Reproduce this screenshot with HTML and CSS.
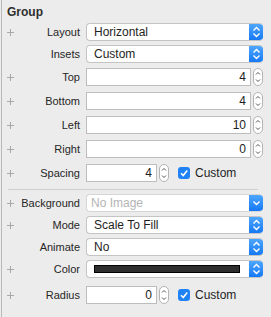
FILE: index.html
```html
<!DOCTYPE html>
<html>
<head>
    <title>Group Inspector</title>
    <link rel="stylesheet" href="styles.css">
</head>
<body>
    <div class="panel">
        <div class="title">Group</div>

        <div class="row pop-row">
            <span class="plus"><svg width="7" height="7"><path d="M3.5 0V7M0 3.5H7" stroke="#a8a8a8" stroke-width="1"/></svg></span>
            <label>Layout</label>
            <div class="popup"><span class="value">Horizontal</span><span class="arrows"><svg width="13" height="18"><path d="M3.5 7.5L6.5 4.5L9.5 7.5M3.5 10.5L6.5 13.5L9.5 10.5" fill="none" stroke="#fff" stroke-width="1.4"/></svg></span></div>
        </div>

        <div class="row pop-row">
            <span class="plus"></span>
            <label>Insets</label>
            <div class="popup"><span class="value">Custom</span><span class="arrows"><svg width="13" height="18"><path d="M3.5 7.5L6.5 4.5L9.5 7.5M3.5 10.5L6.5 13.5L9.5 10.5" fill="none" stroke="#fff" stroke-width="1.4"/></svg></span></div>
        </div>

        <div class="row field-row">
            <span class="plus"><svg width="7" height="7"><path d="M3.5 0V7M0 3.5H7" stroke="#a8a8a8" stroke-width="1"/></svg></span>
            <label>Top</label>
            <div class="field">4</div>
            <span class="stepper"><svg width="10" height="18"><path d="M3 6.5L5 4.5L7 6.5M3 11.5L5 13.5L7 11.5" fill="none" stroke="#555" stroke-width="1"/></svg></span>
        </div>

        <div class="row field-row">
            <span class="plus"><svg width="7" height="7"><path d="M3.5 0V7M0 3.5H7" stroke="#a8a8a8" stroke-width="1"/></svg></span>
            <label>Bottom</label>
            <div class="field">4</div>
            <span class="stepper"><svg width="10" height="18"><path d="M3 6.5L5 4.5L7 6.5M3 11.5L5 13.5L7 11.5" fill="none" stroke="#555" stroke-width="1"/></svg></span>
        </div>

        <div class="row field-row">
            <span class="plus"><svg width="7" height="7"><path d="M3.5 0V7M0 3.5H7" stroke="#a8a8a8" stroke-width="1"/></svg></span>
            <label>Left</label>
            <div class="field">10</div>
            <span class="stepper"><svg width="10" height="18"><path d="M3 6.5L5 4.5L7 6.5M3 11.5L5 13.5L7 11.5" fill="none" stroke="#555" stroke-width="1"/></svg></span>
        </div>

        <div class="row field-row">
            <span class="plus"><svg width="7" height="7"><path d="M3.5 0V7M0 3.5H7" stroke="#a8a8a8" stroke-width="1"/></svg></span>
            <label>Right</label>
            <div class="field">0</div>
            <span class="stepper"><svg width="10" height="18"><path d="M3 6.5L5 4.5L7 6.5M3 11.5L5 13.5L7 11.5" fill="none" stroke="#555" stroke-width="1"/></svg></span>
        </div>

        <div class="row field-row">
            <span class="plus"><svg width="7" height="7"><path d="M3.5 0V7M0 3.5H7" stroke="#a8a8a8" stroke-width="1"/></svg></span>
            <label>Spacing</label>
            <div class="field short">4</div>
            <span class="stepper"><svg width="10" height="18"><path d="M3 6.5L5 4.5L7 6.5M3 11.5L5 13.5L7 11.5" fill="none" stroke="#555" stroke-width="1"/></svg></span>
            <span class="check"><svg width="12" height="12"><rect width="12" height="12" rx="3" fill="#1f82f7"/><path d="M3 6.3L5.2 8.6L9.2 3.4" fill="none" stroke="#fff" stroke-width="1.6"/></svg></span>
            <span class="check-label">Custom</span>
        </div>

        <div class="separator"></div>

        <div class="row pop-row">
            <span class="plus"><svg width="7" height="7"><path d="M3.5 0V7M0 3.5H7" stroke="#a8a8a8" stroke-width="1"/></svg></span>
            <label>Background</label>
            <div class="popup disabled"><span class="value">No Image</span><span class="arrows"><svg width="13" height="18"><path d="M3.5 7.5L6.5 10.5L9.5 7.5" fill="none" stroke="#fff" stroke-width="1.4"/></svg></span></div>
        </div>

        <div class="row pop-row">
            <span class="plus"><svg width="7" height="7"><path d="M3.5 0V7M0 3.5H7" stroke="#a8a8a8" stroke-width="1"/></svg></span>
            <label>Mode</label>
            <div class="popup"><span class="value">Scale To Fill</span><span class="arrows"><svg width="13" height="18"><path d="M3.5 7.5L6.5 4.5L9.5 7.5M3.5 10.5L6.5 13.5L9.5 10.5" fill="none" stroke="#fff" stroke-width="1.4"/></svg></span></div>
        </div>

        <div class="row pop-row">
            <span class="plus"></span>
            <label>Animate</label>
            <div class="popup"><span class="value">No</span><span class="arrows"><svg width="13" height="18"><path d="M3.5 7.5L6.5 4.5L9.5 7.5M3.5 10.5L6.5 13.5L9.5 10.5" fill="none" stroke="#fff" stroke-width="1.4"/></svg></span></div>
        </div>

        <div class="row pop-row">
            <span class="plus"><svg width="7" height="7"><path d="M3.5 0V7M0 3.5H7" stroke="#a8a8a8" stroke-width="1"/></svg></span>
            <label>Color</label>
            <div class="popup"><span class="value"><span class="swatch"></span></span><span class="arrows"><svg width="13" height="18"><path d="M3.5 7.5L6.5 4.5L9.5 7.5M3.5 10.5L6.5 13.5L9.5 10.5" fill="none" stroke="#fff" stroke-width="1.4"/></svg></span></div>
        </div>

        <div class="row field-row radius">
            <span class="plus"><svg width="7" height="7"><path d="M3.5 0V7M0 3.5H7" stroke="#a8a8a8" stroke-width="1"/></svg></span>
            <label>Radius</label>
            <div class="field short">0</div>
            <span class="stepper"><svg width="10" height="18"><path d="M3 6.5L5 4.5L7 6.5M3 11.5L5 13.5L7 11.5" fill="none" stroke="#555" stroke-width="1"/></svg></span>
            <span class="check"><svg width="12" height="12"><rect width="12" height="12" rx="3" fill="#1f82f7"/><path d="M3 6.3L5.2 8.6L9.2 3.4" fill="none" stroke="#fff" stroke-width="1.6"/></svg></span>
            <span class="check-label">Custom</span>
        </div>
    </div>
</body>
</html>
```

FILE: styles.css
```css
html, body { height: 100%; }
body { margin: 0; background: #ececec; font-family: "Liberation Sans", Arial, sans-serif; color: #262626; }
.panel { margin-left: 1px; border-left: 1px solid #b9b9b9; min-height: 100%; box-sizing: border-box; margin-right: 4px; }
.title { height: 21px; padding: 5px 0 0 5px; box-sizing: border-box; font-size: 12px; font-weight: bold; color: #2e2e2e; }
.row { display: flex; align-items: center; }
.pop-row { height: 22px; }
.field-row { height: 24px; }
.radius { margin-top: 3px; }
.plus { width: 16px; height: 7px; display: flex; justify-content: center; flex: none; }
.plus svg { display: block; margin-left: 1px; }
label { width: 62px; flex: none; text-align: right; font-size: 11px; margin-right: 6px; }
.popup { width: 177px; height: 18px; box-sizing: border-box; display: flex; background: #fff; border: 1px solid #c4c4c4; border-right: none; border-radius: 4px; overflow: hidden; }
.popup .value { flex: 1; font-size: 12px; line-height: 16px; padding-left: 7px; color: #1e1e1e; display: flex; align-items: center; }
.popup .arrows { width: 14px; flex: none; background: linear-gradient(#4ea6ff, #1679f4); display: flex; align-items: center; justify-content: center; }
.popup .arrows svg { display: block; }
.popup.disabled { border-color: #d6d6d6; }
.popup.disabled .value { color: #b4b4b4; padding-left: 4px; }
.swatch { display: block; width: 146px; height: 8px; background: #2e2e2e; border: 1px solid #000; box-sizing: border-box; }
.field { width: 165px; height: 18px; box-sizing: border-box; background: #fff; border: 1px solid #bdbdbd; font-size: 12px; line-height: 16px; text-align: right; padding-right: 4px; color: #1e1e1e; }
.field.short { width: 71px; }
.stepper { width: 10px; height: 18px; margin-left: 2px; box-sizing: border-box; border: 1px solid #b4b4b4; border-radius: 5px; background: #fff; display: flex; align-items: center; justify-content: center; flex: none; }
.stepper svg { display: block; margin: -1px; }
.check { margin-left: 9px; width: 12px; height: 12px; }
.check svg { display: block; }
.check-label { margin-left: 5px; font-size: 12px; color: #1e1e1e; }
.separator { height: 1px; background: #cfcfcf; margin: 4px 9px 2px 6px; }
```
